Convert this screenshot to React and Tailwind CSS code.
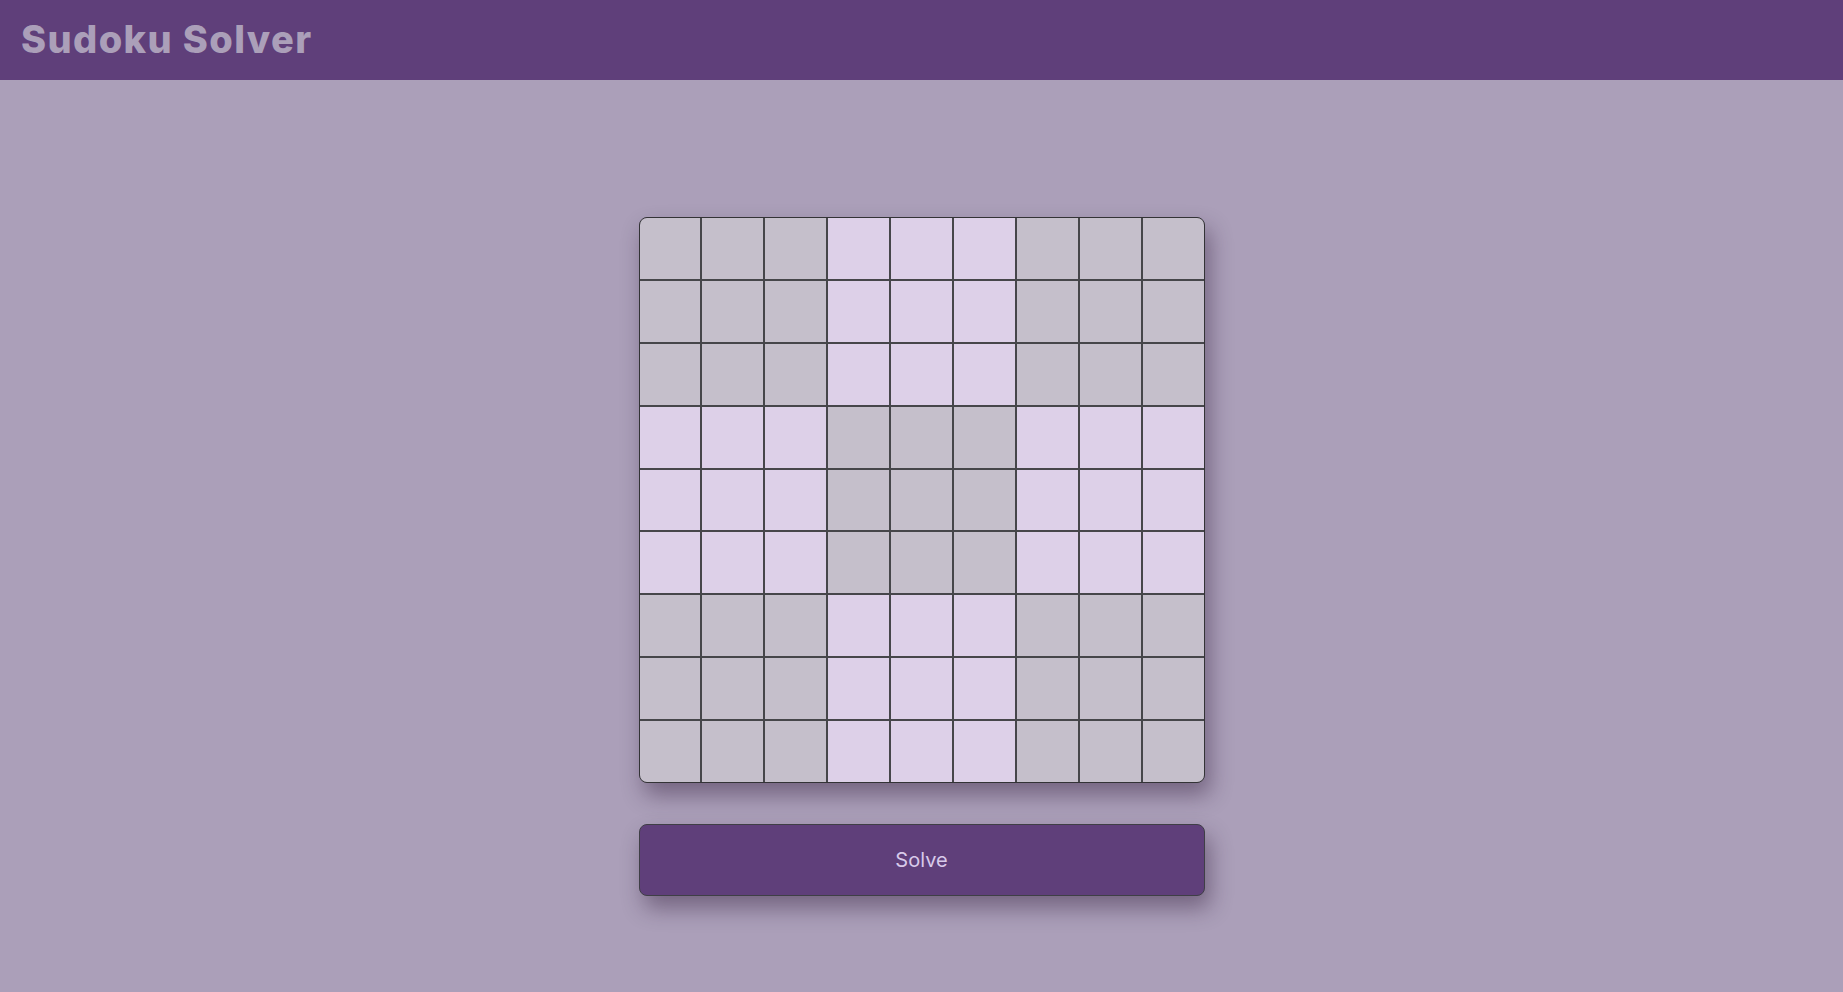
import React from "react";

const isGrey = (r, c) => {
  const br = Math.floor(r / 3);
  const bc = Math.floor(c / 3);
  return (br + bc) % 2 === 0;
};

export default function App() {
  const cells = [];
  for (let r = 0; r < 9; r++) {
    for (let c = 0; c < 9; c++) {
      cells.push(
        <div
          key={`${r}-${c}`}
          className={isGrey(r, c) ? "bg-[#c5bfcb]" : "bg-[#ddd0e8]"}
        />
      );
    }
  }
  return (
    <div
      className="min-h-screen bg-[#ab9fb9] flex flex-col"
      style={{ fontFamily: "Inter, 'Open Sans', sans-serif" }}
    >
      <header className="h-[80px] bg-[#5f3f7a] flex items-center px-[21px]">
        <h1 className="text-[38px] font-extrabold text-[#ab9fb9] tracking-[1.4px] leading-none pb-[2px]">
          Sudoku Solver
        </h1>
      </header>
      <main className="flex flex-col items-center pt-[137px]">
        <div className="w-[566px] h-[566px] grid grid-cols-9 grid-rows-9 gap-[2px] bg-[#46464a] border border-[#333336] rounded-lg overflow-hidden shadow-[5px_12px_22px_rgba(40,20,50,0.42)]">
          {cells}
        </div>
        <button className="mt-[41px] w-[566px] h-[72px] bg-[#5f3f7a] border border-[#3f3f46] rounded-lg text-[20px] text-[#d8caea] shadow-[5px_12px_22px_rgba(40,20,50,0.42)]">
          Solve
        </button>
      </main>
    </div>
  );
}
